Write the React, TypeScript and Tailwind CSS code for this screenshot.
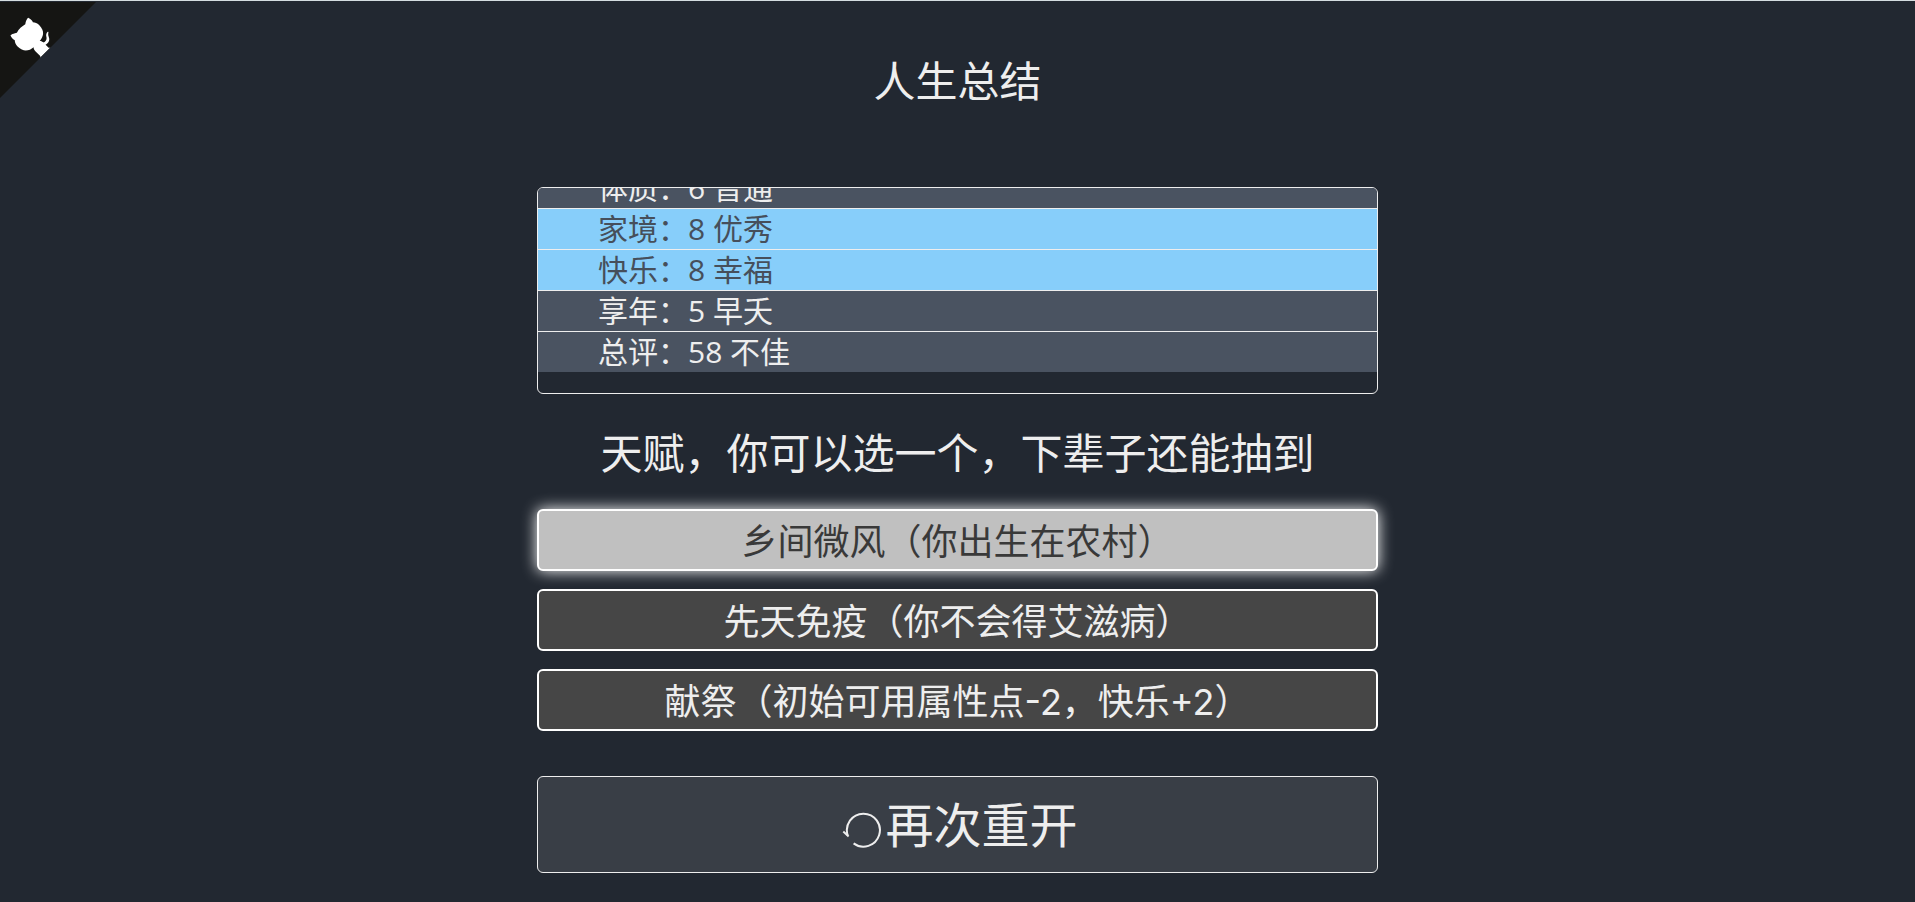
import { useState } from "react";

type Grade = "normal" | "rare";

const stats: { label: string; value: number; judge: string; grade: Grade }[] = [
    { label: "体质", value: 6, judge: "普通", grade: "normal" },
    { label: "家境", value: 8, judge: "优秀", grade: "rare" },
    { label: "快乐", value: 8, judge: "幸福", grade: "rare" },
    { label: "享年", value: 5, judge: "早夭", grade: "normal" },
    { label: "总评", value: 58, judge: "不佳", grade: "normal" },
];

const talents = [
    "乡间微风（你出生在农村）",
    "先天免疫（你不会得艾滋病）",
    "献祭（初始可用属性点-2，快乐+2）",
];

const GithubCorner = () => (
    <a href="#" aria-label="GitHub" className="absolute left-0 top-px">
        <svg viewBox="0 0 250 250" className="block size-24">
            <path d="M0 0H250L0 250Z" fill="#151513" />
            <clipPath id="corner">
                <path d="M0 0H250L0 250Z" />
            </clipPath>
            <g clipPath="url(#corner)" fill="#fff">
                <g transform="translate(250 0) scale(-1.03 1.03)">
                    <path d="M128.3,109.0 C113.8,99.7 119.0,89.6 119.0,89.6 C122.0,82.7 120.5,78.6 120.5,78.6 C119.2,72.0 123.4,76.3 123.4,76.3 C127.3,80.9 125.5,87.3 125.5,87.3 C122.9,97.6 130.6,101.9 134.4,103.2" />
                    <path d="M115.0,115.0 C114.9,115.1 118.7,116.5 119.8,115.4 L133.7,101.6 C136.9,99.2 139.9,98.4 142.2,98.6 C133.8,88.0 127.5,74.4 143.8,58.0 C148.5,53.4 154.0,51.2 159.7,51.0 C160.3,49.4 163.2,43.6 171.4,40.1 C171.4,40.1 176.1,42.5 178.8,56.2 C183.1,58.6 187.2,61.8 190.9,65.4 C194.5,69.0 197.7,73.2 200.1,77.6 C213.8,80.2 216.3,84.9 216.3,84.9 C212.7,93.1 206.9,96.0 205.4,96.6 C205.1,102.4 203.0,107.8 198.3,112.5 C181.9,128.9 168.3,122.5 157.7,114.1 C157.9,116.9 156.7,120.9 152.7,124.9 L141.0,136.5 C139.8,137.7 141.6,141.9 141.8,141.8 Z" />
                </g>
            </g>
        </svg>
    </a>
);

const RestartIcon = () => (
    <svg viewBox="0 0 48 48" className="size-12" fill="none" stroke="currentColor" strokeWidth="2">
        <path d="M16.6 42.4A16.5 16.5 0 1 0 10.8 34.5" />
        <path d="M6.3 30.6L11.6 35.4" />
    </svg>
);

const App = () => {
    const [selected, setSelected] = useState(0);

    return (
        <div className="relative flex min-h-screen flex-col items-center border-t border-[#d5dde0] bg-[#222831] px-4 pb-7 font-['Open_Sans','Noto_Sans_CJK_SC',sans-serif] text-[#eeeeee]">
            <GithubCorner />

            <h1 className="mt-12 text-[42px] leading-16">人生总结</h1>

            {/* column-reverse keeps the list scrolled to its end */}
            <div className="mt-[74px] flex h-[207px] w-full max-w-[841px] flex-col-reverse overflow-y-auto rounded-md border border-[#eeeeee] [scrollbar-width:none]">
                <ul className="shrink-0 pb-[21px]">
                    {stats.map((s) => (
                        <li
                            key={s.label}
                            className={
                                "border-b border-[#eeeeee] px-15 text-[30px] leading-10 last:border-b-0 " +
                                (s.grade === "rare" ? "bg-[#87cefa] text-[#464f5b]" : "bg-[#4a5361]")
                            }
                        >
                            {s.label}：{s.value} {s.judge}
                        </li>
                    ))}
                </ul>
            </div>

            <h2 className="mt-[27px] text-center text-[42px] leading-16">天赋，你可以选一个，下辈子还能抽到</h2>

            <div className="mt-6 flex w-full max-w-[841px] flex-col gap-[18px]">
                {talents.map((t, i) => (
                    <button
                        key={t}
                        type="button"
                        onClick={() => setSelected(i)}
                        className={
                            "h-[62px] rounded-md border-2 border-white pt-1 font-['Inter','Noto_Sans_CJK_SC',sans-serif] text-[36px] leading-[54px] " +
                            (selected === i
                                ? "bg-[#c0c0c0] text-[#393939] shadow-[0_0_15px_#fff]"
                                : "bg-[#464646]")
                        }
                    >
                        {t}
                    </button>
                ))}
            </div>

            <button
                type="button"
                className="mt-[45px] flex h-[97px] w-full max-w-[841px] items-center justify-center rounded-md border border-[#eeeeee] bg-[#393e46] text-[48px] leading-16"
            >
                <RestartIcon />
                再次重开
            </button>
        </div>
    );
};

export default App;
